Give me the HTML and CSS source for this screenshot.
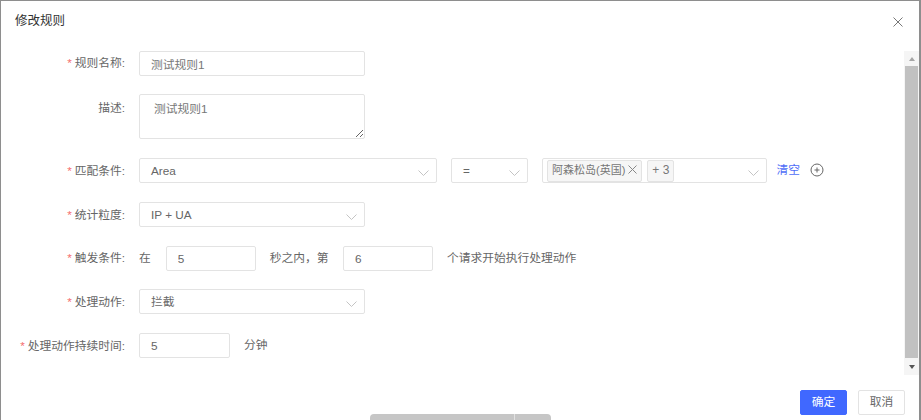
FILE: index.html
```html
<!DOCTYPE html>
<html lang="zh-CN">
<head>
<meta charset="utf-8">
<title>修改规则</title>
<link rel="stylesheet" href="styles.css">
</head>
<body>
<div class="modal">
  <header class="modal-head">
    <h1 class="modal-title">修改规则</h1>
    <svg class="close" width="10" height="10" viewBox="0 0 10 10"><path d="M.5.5l9 9M9.5.5l-9 9"/></svg>
  </header>
  <div class="modal-body">
    <form class="form">
      <div class="row">
        <label class="label"><span class="req">*</span>规则名称:</label>
        <input class="input w-226 muted" value="测试规则1">
      </div>
      <div class="row row-text">
        <label class="label">描述:</label>
        <textarea class="area">测试规则1</textarea>
      </div>
      <div class="row">
        <label class="label"><span class="req">*</span>匹配条件:</label>
        <div class="select w-298">Area<svg class="chev" width="11" height="6" viewBox="0 0 11 6"><path d="M.5.5l5 5 5-5"/></svg></div>
        <div class="select w-77">=<svg class="chev" width="11" height="6" viewBox="0 0 11 6"><path d="M.5.5l5 5 5-5"/></svg></div>
        <div class="select multi">
          <span class="tag">阿森松岛(英国)<svg class="tag-x" width="9" height="9" viewBox="0 0 9 9"><path d="M.5.5l8 8M8.5.5l-8 8"/></svg></span>
          <span class="tag tag-more">+ 3</span>
          <svg class="chev" width="11" height="6" viewBox="0 0 11 6"><path d="M.5.5l5 5 5-5"/></svg>
        </div>
        <a class="link">清空</a>
        <svg class="plus" width="14" height="14" viewBox="0 0 14 14"><circle cx="7" cy="7" r="6"/><path d="M7 4.5v5M4.5 7h5"/></svg>
      </div>
      <div class="row">
        <label class="label"><span class="req">*</span>统计粒度:</label>
        <div class="select w-226">IP + UA<svg class="chev" width="11" height="6" viewBox="0 0 11 6"><path d="M.5.5l5 5 5-5"/></svg></div>
      </div>
      <div class="row">
        <label class="label"><span class="req">*</span>触发条件:</label>
        <span class="text">在</span>
        <input class="input w-90 first" value="5">
        <span class="text">秒之内，第</span>
        <input class="input w-90" value="6">
        <span class="text">个请求开始执行处理动作</span>
      </div>
      <div class="row">
        <label class="label"><span class="req">*</span>处理动作:</label>
        <div class="select w-226">拦截<svg class="chev" width="11" height="6" viewBox="0 0 11 6"><path d="M.5.5l5 5 5-5"/></svg></div>
      </div>
      <div class="row">
        <label class="label"><span class="req">*</span>处理动作持续时间:</label>
        <input class="input w-91" value="5">
        <span class="text">分钟</span>
      </div>
    </form>
    <div class="scrollbar">
      <span class="arrow up"></span>
      <span class="thumb"></span>
      <span class="arrow down"></span>
    </div>
  </div>
  <footer class="modal-foot">
    <button class="btn primary" type="button">确定</button>
    <button class="btn" type="button">取消</button>
  </footer>
  <div class="h-scroll"><span class="h-scroll-end"></span></div>
</div>
</body>
</html>
```
FILE: styles.css
```css
* { box-sizing: border-box; }
html, body { height: 100%; }
body {
  margin: 0;
  overflow: hidden;
  background: #8e8e8e;
  font: 11.75px/1.4 "Liberation Sans", "Noto Sans CJK SC", sans-serif;
  color: #666;
}
.modal {
  position: relative;
  display: flex;
  flex-direction: column;
  width: 918px;
  height: 419px;
  margin: 1px 0 0 1px;
  background: #fff;
}
.modal-head {
  display: flex;
  align-items: center;
  justify-content: space-between;
  flex: none;
  height: 49.6px;
  padding: 0 16px 8px 14px;
}
.modal-title {
  margin: 0;
  font-size: 12.5px;
  font-weight: 400;
  color: #333;
}
.close path { fill: none; stroke: #777; stroke-width: 1; }

.modal-body {
  display: flex;
  flex: none;
  height: 324.4px;
}
.form {
  flex: 1;
  display: flex;
  flex-direction: column;
  gap: 18.75px;
  min-width: 0;
}
.row {
  display: flex;
  align-items: center;
  height: 25px;
  flex: none;
}
.row-text { align-items: flex-start; height: 45px; }
.row-text .label { padding-top: 6px; }
.label {
  width: 124px;
  margin-right: 14px;
  padding-top: 1px;
  text-align: right;
  color: #666;
  white-space: nowrap;
}
.req {
  margin-right: 3px;
  color: #f56c6c;
}
.input, .select, .area {
  height: 25px;
  border: 1px solid #e3e3e3;
  border-radius: 2px;
  background: #fff;
  color: #666;
  font: inherit;
  outline: none;
}
.input { padding: 0 11px; }
.muted { color: #777; }
.w-226 { width: 226px; }
.w-90 { width: 90px; }
.w-91 { width: 91px; }
.w-298 { width: 298px; }
.w-77 { width: 77px; margin-left: 14px; }
.area {
  display: block;
  width: 226px;
  height: 45px;
  padding: 6px 14px;
  color: #777;
  resize: both;
}
.select {
  position: relative;
  display: flex;
  align-items: center;
  padding: 1px 11px 0;
}
.chev {
  position: absolute;
  top: 11px;
  right: 7px;
}
.chev path { fill: none; stroke: #c4c4c4; stroke-width: 1; }
.multi {
  width: 225px;
  margin-left: 14px;
  padding: 0 4px;
  gap: 5px;
}
.tag {
  display: flex;
  align-items: center;
  height: 22px;
  padding: 0 4px;
  border: 1px solid #e3e3e3;
  border-radius: 2px;
  background: #f6f6f6;
  color: #777;
  font-size: 11px;
  white-space: nowrap;
}
.tag-more { padding: 0 4px; font-size: 12px; }
.tag-x { margin: -2px 0 0 3px; }
.tag-x path { fill: none; stroke: #888; stroke-width: 1; }
.link {
  margin-left: 9.5px;
  color: #4f6ef7;
}
.plus { margin: -2px 0 0 9.5px; }
.plus circle, .plus path { fill: none; stroke: #666; stroke-width: 1; }
.text { margin-left: 14px; color: #666; white-space: nowrap; }
.label + .text { margin-left: 0; }
.input + .text { margin-left: 14px; }
.text + .input { margin-left: 14.5px; }
.text + .first { margin-left: 15px; }

.scrollbar {
  display: flex;
  flex-direction: column;
  align-items: center;
  flex: none;
  width: 15px;
  background: #f5f5f5;
}
.arrow {
  flex: none;
  width: 0;
  height: 0;
  border-left: 3.5px solid transparent;
  border-right: 3.5px solid transparent;
}
.up { margin: 6px 0 5px; border-bottom: 4px solid #a5a5a5; }
.down { margin: 7px 0 6px; border-top: 4px solid #555; }
.thumb {
  flex: 1;
  width: 13px;
  background: #c1c1c1;
}
.modal-foot {
  display: flex;
  justify-content: flex-end;
  gap: 11px;
  padding: 15px 14px 0 0;
}
.btn {
  width: 47px;
  height: 25px;
  padding: 0;
  border: 1px solid #e3e3e3;
  border-radius: 2px;
  background: #fff;
  color: #666;
  font: inherit;
}
.primary {
  border-color: #4068ff;
  background: #4068ff;
  color: #fff;
}
.h-scroll {
  position: absolute;
  left: 369px;
  bottom: 0;
  width: 181px;
  height: 6px;
  border-radius: 4px 4px 0 0;
  background: #c6c6c6;
}
.h-scroll-end {
  position: absolute;
  top: 0;
  left: 144px;
  bottom: 0;
  width: 1px;
  background: #e2e2e2;
}
```
